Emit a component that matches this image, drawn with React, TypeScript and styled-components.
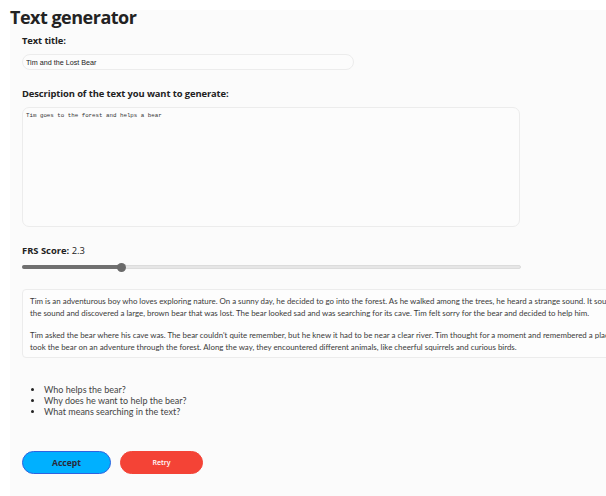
import * as React from "react";
import styled, { createGlobalStyle } from "styled-components";

const GlobalStyle = createGlobalStyle`
  html, body {
    margin: 0;
    padding: 0;
    background: #ffffff;
    overflow: hidden;
  }
  body {
    padding: 10px 0 0 10px;
    font-family: "Noto Sans", "Open Sans", sans-serif;
  }
`;

const Page = styled.div`
  background-color: #fbfbfb;
  min-height: 486px;
  box-sizing: border-box;
  width: 760px;
`;

const Heading = styled.h1`
  margin: 0;
  font-family: "Open Sans", sans-serif;
  font-size: 18px;
  font-weight: 700;
  line-height: 15px;
  color: #222;
  letter-spacing: -0.5px;
`;

const Content = styled.div`
  padding: 9px 0 0 12px;
  display: flex;
  flex-direction: column;
`;

const Label = styled.label`
  display: block;
  font-family: "Open Sans", sans-serif;
  font-weight: 700;
  font-size: 9.4px;
  letter-spacing: -0.1px;
  color: #222;
  line-height: 14px;
`;

const Field = styled.div<{ $gap?: number }>`
  display: flex;
  flex-direction: column;
  gap: ${(p) => p.$gap ?? 6}px;
`;

const TitleInput = styled.input`
  box-sizing: border-box;
  width: 332px;
  height: 16px;
  margin: 0;
  padding: 0 3px;
  border: 1px solid #ececec;
  border-radius: 8px;
  background: #fcfcfc;
  font-family: "Liberation Sans", Arial, sans-serif;
  font-size: 7.2px;
  color: #222;
  outline: none;
`;

const DescArea = styled.textarea`
  box-sizing: border-box;
  width: 498px;
  height: 120px;
  margin: 0;
  padding: 4px 3px;
  border: 1px solid #ececec;
  border-radius: 7px;
  background: #fcfcfc;
  font-family: "Liberation Mono", monospace;
  font-size: 5.8px;
  color: #333;
  resize: none;
  outline: none;
`;

const ScoreLine = styled.div`
  font-family: "Open Sans", sans-serif;
  font-size: 9.4px;
  color: #222;
  line-height: 14px;
  b {
    font-weight: 700;
  }
`;

const Track = styled.div`
  position: relative;
  box-sizing: border-box;
  width: 499px;
  height: 4px;
  border-radius: 2px;
  background: #e6e6e6;
  border: 1px solid #dcdcdc;
`;

const Fill = styled.div`
  height: 4px;
  margin: -1px 0 0 -1px;
  border-radius: 2px;
  background: #707070;
`;

const Thumb = styled.div`
  position: absolute;
  top: -3px;
  width: 9px;
  height: 9px;
  margin-left: -5px;
  border-radius: 50%;
  background: #6a6a6a;
`;

const Story = styled.div`
  box-sizing: border-box;
  width: 740px;
  padding: 5px 7px 4px;
  border: 1px solid #ececec;
  border-radius: 4px;
  background: #fdfdfd;
  font-family: "Lato", sans-serif;
  font-size: 7.9px;
  line-height: 12px;
  color: #3a3a3a;
  p {
    margin: 0;
    white-space: nowrap;
  }
  p + p {
    margin-top: 10px;
  }
`;

const Questions = styled.ul`
  margin: 0;
  padding-left: 22px;
  font-family: "Lato", sans-serif;
  font-size: 9px;
  line-height: 11px;
  color: #444;
  li::marker {
    color: #222;
  }
`;

const Buttons = styled.div`
  display: flex;
  gap: 9px;
`;

const Pill = styled.button<{ $variant: "accept" | "retry" }>`
  box-sizing: border-box;
  height: 23px;
  width: ${(p) => (p.$variant === "accept" ? 89 : 83)}px;
  border-radius: 12px;
  border: 1px solid ${(p) => (p.$variant === "accept" ? "#2f62e0" : "#f44336")};
  background: ${(p) => (p.$variant === "accept" ? "#00b0ff" : "#f44336")};
  color: ${(p) => (p.$variant === "accept" ? "#2a2a3a" : "#ffffff")};
  font-family: "Open Sans", sans-serif;
  font-weight: ${(p) => (p.$variant === "accept" ? 700 : 600)};
  font-size: ${(p) => (p.$variant === "accept" ? 8.6 : 7)}px;
  padding: 0;
  cursor: pointer;
`;

const questions = [
  "Who helps the bear?",
  "Why does he want to help the bear?",
  "What means searching in the text?",
];

export default function App() {
  const score = 2.3;
  const min = 1;
  const max = 7.5;
  const pct = ((score - min) / (max - min)) * 100;

  return (
    <>
      <GlobalStyle />
      <Page>
        <Heading>Text generator</Heading>
        <Content>
          <Field>
            <Label>Text title:</Label>
            <TitleInput defaultValue="Tim and the Lost Bear" />
          </Field>
          <Field style={{ marginTop: 17 }}>
            <Label>Description of the text you want to generate:</Label>
            <DescArea defaultValue="Tim goes to the forest and helps a bear" />
          </Field>
          <Field $gap={7} style={{ marginTop: 17 }}>
            <ScoreLine>
              <b>FRS Score:</b> {score}
            </ScoreLine>
            <Track>
              <Fill style={{ width: `${pct}%` }} />
              <Thumb style={{ left: `${pct}%` }} />
            </Track>
          </Field>
          <Story style={{ marginTop: 20 }}>
            <p>
              Tim is an adventurous boy who loves exploring nature. On a sunny day, he decided to go into the forest. As he walked among the trees, he heard a strange sound. It sounded like a cry. Tim followed
              <br />
              the sound and discovered a large, brown bear that was lost. The bear looked sad and was searching for its cave. Tim felt sorry for the bear and decided to help him.
            </p>
            <p>
              Tim asked the bear where his cave was. The bear couldn't quite remember, but he knew it had to be near a clear river. Tim thought for a moment and remembered a place he had seen. He
              <br />
              took the bear on an adventure through the forest. Along the way, they encountered different animals, like cheerful squirrels and curious birds.
            </p>
          </Story>
          <Questions style={{ marginTop: 26 }}>
            {questions.map((q) => (
              <li key={q}>{q}</li>
            ))}
          </Questions>
          <Buttons style={{ marginTop: 34 }}>
            <Pill $variant="accept">Accept</Pill>
            <Pill $variant="retry">Retry</Pill>
          </Buttons>
        </Content>
      </Page>
    </>
  );
}
